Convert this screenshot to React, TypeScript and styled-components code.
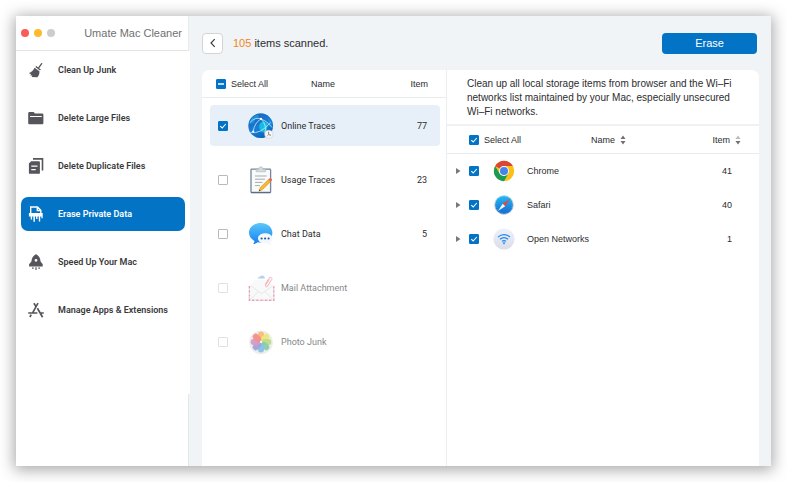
import React, { useEffect, useRef, useState } from "react";
import styled, { createGlobalStyle, css } from "styled-components";

const uiFont = `Roboto, "Liberation Sans", sans-serif`;
const wideFont = `"Liberation Sans", Arial, sans-serif`;

const GlobalStyle = createGlobalStyle`
  *, *::before, *::after { box-sizing: border-box; }
  body {
    margin: 0;
    background: #fff;
    color: #2c2c2e;
    font-family: ${uiFont};
    font-size: 9px;
    line-height: 12px;
  }
  button { font: inherit; color: inherit; padding: 0; border: 0; background: none; cursor: pointer; }
  svg { display: block; flex: none; }
`;

const Page = styled.div`
  min-height: 100vh;
  padding: 16px;
  display: flex;
`;

const AppWindow = styled.div`
  flex: 1;
  display: flex;
  min-width: 0;
  background: #f0f4f7;
  box-shadow: 0 2px 14px 2px rgba(0, 0, 0, 0.34);
`;

const Sidebar = styled.aside`
  flex: none;
  width: 174px;
  display: flex;
  flex-direction: column;
`;

const TitleBar = styled.header`
  height: 35px;
  margin-right: 1px;
  padding: 0 6px 0 5px;
  display: flex;
  align-items: center;
  gap: 5px;
  background: #fff;
  border-bottom: 1px solid #e4e4e4;
  border-right: 1px solid #e9ebec;
`;

const WindowDot = styled.button<{ $color: string }>`
  width: 8px;
  height: 8px;
  border-radius: 50%;
  background: ${(p) => p.$color};
`;

const AppTitle = styled.h1`
  margin: 0 0 0 auto;
  font-family: ${wideFont};
  font-size: 11px;
  line-height: 16px;
  font-weight: 400;
  color: #707070;
  white-space: nowrap;
`;

const Nav = styled.nav`
  padding: 2px 5px 67px;
  display: flex;
  flex-direction: column;
  gap: 14px;
  background: #fff;
`;

const SidebarFoot = styled.div`
  flex: 1;
  margin-right: 1px;
  background: #fff;
  border-right: 1px solid #e4e6e8;
`;

const NavItem = styled.a<{ $active?: boolean }>`
  height: 34px;
  padding-left: 7px;
  display: flex;
  align-items: center;
  gap: 14px;
  border-radius: 7px;
  font-weight: 600;
  text-decoration: none;
  white-space: nowrap;
  color: ${(p) => (p.$active ? "#fff" : "#3a3a3c")};
  background: ${(p) => (p.$active ? "#0373c6" : "transparent")};
  svg { color: ${(p) => (p.$active ? "#fff" : "#55555b")}; }
`;

const Main = styled.main`
  flex: 1;
  min-width: 0;
  padding: 0 12px;
  display: flex;
  flex-direction: column;
`;

const Toolbar = styled.div`
  height: 54px;
  padding-right: 2px;
  display: flex;
  align-items: center;
  gap: 10px;
  font-family: ${wideFont};
`;

const BackButton = styled.button`
  width: 21px;
  height: 21px;
  display: grid;
  place-items: center;
  color: #333;
  background: #fff;
  border: 1px solid #d2d4d6;
  border-radius: 4px;
`;

const Summary = styled.p`
  margin: 0;
  font-size: 11px;
  line-height: 16px;
  strong { font-weight: 400; color: #f08519; }
`;

const EraseButton = styled.button`
  width: 95px;
  height: 21px;
  margin-left: auto;
  color: #fff;
  font-size: 11px;
  line-height: 16px;
  background: #0373c6;
  border-radius: 4px;
`;

const Panels = styled.div`
  flex: 1;
  display: grid;
  grid-template-columns: 244px minmax(0, 1fr);
  gap: 1px;
  background: #eceff1;
  border-radius: 7px 7px 0 0;
  overflow: hidden;
`;

const Panel = styled.section`
  min-width: 0;
  background: #fff;
`;

const Table = styled.table`
  display: block;
  border-collapse: collapse;
  thead { display: block; }
  th, td { padding: 0; text-align: left; font-weight: 400; }
`;

const headRow = css`
  display: grid;
  align-items: center;
  height: 28px;
  border-bottom: 1px solid #e9ebec;
  font-family: ${wideFont};
  font-size: 9px;
`;

const CategoryHead = styled.tr`
  ${headRow}
  padding: 0 18px 0 14px;
  grid-template-columns: 95px 1fr auto;
`;

const CategoryBody = styled.tbody`
  padding: 7px 6px 7px 8px;
  display: flex;
  flex-direction: column;
  gap: 13px;
`;

const CategoryRow = styled.tr<{ $selected?: boolean; $dim?: boolean }>`
  height: 41px;
  padding: 0 13px 0 8px;
  display: grid;
  grid-template-columns: 30px 33px 1fr auto;
  align-items: center;
  border-radius: 4px;
  background: ${(p) => (p.$selected ? "#e7f0f8" : "transparent")};
  color: ${(p) => (p.$dim ? "#85878a" : "inherit")};
  td > svg { opacity: ${(p) => (p.$dim ? 0.75 : 1)}; }
`;

const DetailHead = styled.tr`
  ${headRow}
  padding: 0 18px 0 22px;
  grid-template-columns: 122px 1fr auto;
`;

const DetailBody = styled.tbody`
  padding: 0 27px 0 7px;
  display: flex;
  flex-direction: column;
  font-family: ${wideFont};
`;

const DetailRow = styled.tr`
  height: 34px;
  display: grid;
  grid-template-columns: 15px 24px 34px 1fr auto;
  align-items: center;
`;

const Description = styled.p`
  min-height: 55px;
  margin: 0;
  padding: 7px 20px 5px;
  font-family: ${wideFont};
  font-size: 10px;
  line-height: 14px;
  border-bottom: 2px solid #eff1f2;
`;

const CheckLabel = styled.label`
  display: flex;
  align-items: center;
  gap: 5px;
  white-space: nowrap;
`;

const CheckBox = styled.input`
  appearance: none;
  flex: none;
  display: block;
  width: 10px;
  height: 10px;
  margin: 0;
  border: 1px solid #b9b9b9;
  border-radius: 1px;
  background: #fff center / 10px 10px no-repeat;
  background-origin: border-box;
  &:disabled { border-color: #e0e1e2; }
  &:checked, &:indeterminate { border-color: #0373c6; background-color: #0373c6; }
  &:checked {
    background-image: url("data:image/svg+xml,%3Csvg xmlns='http://www.w3.org/2000/svg' viewBox='0 0 10 10'%3E%3Cpath d='M2.3 5.1 4.2 7 7.8 3' fill='none' stroke='white' stroke-width='1.1'/%3E%3C/svg%3E");
  }
  &:indeterminate {
    background-image: url("data:image/svg+xml,%3Csvg xmlns='http://www.w3.org/2000/svg' viewBox='0 0 10 10'%3E%3Cpath d='M2 5h6' stroke='white' stroke-width='1.3'/%3E%3C/svg%3E");
  }
`;

const SortButton = styled.button`
  display: flex;
  align-items: center;
  gap: 5px;
`;

const DisclosureButton = styled.button`
  width: 8px;
  height: 12px;
  display: grid;
  place-items: center;
  color: #77797b;
`;

/* ---------- icons ---------- */

const BroomIcon = () => (
  <svg width="16" height="16" viewBox="0 0 16 16" fill="none">
    <path d="M13.7 1.6 10.8 5.6" stroke="currentColor" strokeWidth="1.3" strokeLinecap="round" />
    <path d="M8.2 3.9 12.9 7.4 12 8.6 7.3 5.1Z" fill="currentColor" />
    <path d="M6.6 5.7 11.4 9.3C11.6 11.6 11 13.6 9.3 15.3L3.6 14.9 4.4 13.5 2.4 13.6 3 12.3 .9 11C3.6 10 5.4 8.2 6.6 5.7Z" fill="currentColor" />
  </svg>
);

const FolderIcon = () => (
  <svg width="16" height="16" viewBox="0 0 16 16" fill="currentColor">
    <path fillRule="evenodd" d="M1.4 2.1H5.6L7 3.5H14.2Q15.4 3.5 15.4 4.7V13Q15.4 14.2 14.2 14.2H1.4Q.2 14.2 .2 13V3.3Q.2 2.1 1.4 2.1ZM2 5.9V7.1H13.7V5.9Z" />
  </svg>
);

const CopyIcon = () => (
  <svg width="16" height="16" viewBox="0 0 16 16" fill="none">
    <path d="M5 .9H14.5V12.6" stroke="currentColor" strokeWidth="1.6" />
    <path fill="currentColor" fillRule="evenodd" d="M3.2 3.2H11Q11.9 3.2 11.9 4.1V14.9Q11.9 15.8 11 15.8H1.8Q.9 15.8 .9 14.9V5.5ZM3.3 7.4V8.7H9.5V7.4ZM3.3 11V12.3H7.7V11Z" />
  </svg>
);

const ShredIcon = () => (
  <svg width="16" height="16" viewBox="0 0 16 16" fill="none">
    <path d="M2.7 7.5V1H9.5L12.8 4.2V7.5M9.3 1V4.5H12.8" stroke="currentColor" strokeWidth="1.4" />
    <path d="M.9 7H14.7V12.3H13.4V10.4H12.2V15.5H10.8V10.4H9.5V13H8.1V10.4H6.9V15.8H5.4V10.4H4.1V13.5H2.7V10.4H.9Z" fill="currentColor" />
  </svg>
);

const RocketIcon = () => (
  <svg width="16" height="16" viewBox="0 0 16 16" fill="currentColor">
    <path fillRule="evenodd" d="M8 .2C10.9 1.5 12.2 4 12.6 7.4L14.7 10.3V12.4H1.1V10.3L3.4 7.4C3.8 4 5.1 1.5 8 .2ZM8 4.9A1.4 1.4 0 1 0 8 7.7 1.4 1.4 0 1 0 8 4.9Z" />
    <path d="M4.3 13.2H5.5V15H4.3ZM7.4 13.2H8.6V16H7.4ZM10.5 13.2H11.7V15H10.5Z" />
  </svg>
);

const AppsIcon = () => (
  <svg width="16" height="16" viewBox="0 0 16 16" fill="none" stroke="currentColor" strokeWidth="1.7">
    <path d="M10 1.2 4.6 10.8M5.9 1.2 8 4.6M9.4 6.2 14.6 15.2M.2 11H9.4M12.3 11H15.8M3.2 12.6 1.9 15" />
  </svg>
);

const BackIcon = () => (
  <svg width="10" height="10" viewBox="0 0 10 10" fill="none" stroke="currentColor" strokeWidth="1.1">
    <path d="M6.7 1.2 3 5 6.7 8.8" />
  </svg>
);

const SortIcon = ({ upColor = "#6e7072" }: { upColor?: string }) => (
  <svg width="6" height="10" viewBox="0 0 6 10">
    <path d="M3 .5 5.5 4H.5Z" fill={upColor} />
    <path d="M3 9.5 5.5 6H.5Z" fill="#6e7072" />
  </svg>
);

const TriangleIcon = () => (
  <svg width="6" height="6" viewBox="0 0 6 6" fill="currentColor"><path d="M1 0 5.5 3 1 6Z" /></svg>
);

const GlobeIcon = () => (
  <svg width="26" height="26" viewBox="0 0 26 26" fill="none">
    <defs>
      <linearGradient id="globe" x1="6" y1="1" x2="18" y2="25" gradientUnits="userSpaceOnUse">
        <stop stopColor="#1c63bd" /><stop offset=".55" stopColor="#1580d6" /><stop offset="1" stopColor="#0b5fb5" />
      </linearGradient>
    </defs>
    <circle cx="12.7" cy="12.7" r="12.4" fill="url(#globe)" />
    <path d="M3 6Q6 2.4 10 1.6L11 4 7 6.6 6 10 1.4 11Z" fill="#1c90dd" />
    <path d="M12 10.5Q14.5 8 17.5 9.2T19.6 13.5Q19.5 17 17 18.8T12.4 17.4 12 10.5Z" fill="#16bde2" />
    <path d="M20 5 23.6 9 23.5 13.4 21 11Z" fill="#1c90dd" />
    <path d="M1.8 9.6Q7 3.8 13 5.8T24.2 14.6M13 5.8Q6.4 10 5.2 18.4M13 5.8Q19.6 13 16.6 20.4M2.6 19.4Q12 21.6 22.6 9.6" stroke="#c9e8fd" strokeWidth=".8" />
    <circle cx="13" cy="5.9" r="1.1" fill="#fff" /><circle cx="5.2" cy="18.6" r="1.1" fill="#fff" />
    <circle cx="20.8" cy="21.3" r="4.1" fill="#f3f5f6" stroke="#c5cbd0" strokeWidth=".5" />
    <path d="M20.6 18.8V21.6L23 22.3" stroke="#555" strokeWidth=".7" /><path d="M20.6 21.6 18.9 23.2" stroke="#f28620" strokeWidth=".7" />
  </svg>
);

const ClipboardIcon = () => (
  <svg width="26" height="28" viewBox="0 0 26 28" fill="none">
    <rect x="3" y="3.2" width="19.6" height="23.3" rx=".8" fill="#f9fafa" stroke="#75859a" strokeWidth="1.3" />
    <path d="M3 26.6H22.6" stroke="#586b80" strokeWidth="1" />
    <path d="M8.2 5.8V3.2H10.6Q10.8 .8 12.8 .8T15 3.2H17.6V5.8Z" fill="#d4dadd" stroke="#aeb6bc" strokeWidth=".6" />
    <path d="M7 10H18.7M7 13.2H17M7 16.4H14.5M7 19.6H12" stroke="#a6acb2" strokeWidth="1" />
    <path d="M11 25.1 12.4 21.3 20.4 13.5 22.6 15.7 14.3 23.8Z" fill="#f5b82e" stroke="#cf8b15" strokeWidth=".5" />
    <path d="M20.3 13.6 21.7 12.2Q22.3 11.6 23 12.3L23.9 13.2Q24.5 13.8 23.9 14.5L22.6 15.8Z" fill="#ef625f" />
    <path d="M10.8 25.3 11.4 23.6 12.6 24.7Z" fill="#414141" />
  </svg>
);

const ChatIcon = () => (
  <svg width="26" height="26" viewBox="0 0 26 26">
    <defs><linearGradient id="chat" x2="0" y2="1"><stop stopColor="#5bc8fa" /><stop offset="1" stopColor="#147ff3" /></linearGradient></defs>
    <path d="M12.7 2C19.4 2 24.4 6.4 24.4 11.8S19.4 21.6 12.7 21.6Q11 21.6 9.7 21.3 8 22.9 5.2 23 6.6 21.7 6.4 19.9C3.2 18.2 1 15.3 1 11.8 1 6.4 6 2 12.7 2Z" fill="url(#chat)" />
    <path d="M17.2 12.3C21.3 12.3 24.4 14.5 24.4 17.5Q24.4 19.8 22.4 21.2 22.5 22.9 23.7 24 21.4 24 19.8 22.4C14.6 23.2 10 21 10 17.5 10 14.5 13.1 12.3 17.2 12.3Z" fill="#f3f8fc" />
    <circle cx="13.6" cy="17.5" r="1.1" fill="#1659a8" /><circle cx="17.1" cy="17.5" r="1.1" fill="#1659a8" /><circle cx="20.6" cy="17.5" r="1.1" fill="#1659a8" />
  </svg>
);

const MailIcon = () => (
  <svg width="28" height="28" viewBox="0 0 28 28" fill="none">
    <path d="M9.6 4.4Q10.2 2.8 12 2.8 13 1 15 1.7 16.6 2.1 17 4.4Z" fill="#9cc3e5" />
    <path d="M2.2 11.5 5.5 8.2V6H22V8.2L25.2 11.5V25H2.2Z" fill="#f7f8f9" />
    <path d="M1.4 12V26.2H25.8V12" stroke="#ee7585" strokeWidth="1.4" strokeDasharray="2.2 2" />
    <path d="M1.4 14.3V26.2H25.8V12" stroke="#a6c4e6" strokeWidth="1.3" strokeDasharray="1.2 3" />
    <path d="M2.6 11.5 12 18.6Q13.6 19.9 15.2 18.6L24.8 11.5M3 25 10.2 17.4M24.4 25 17 17.4" stroke="#d6d9dc" strokeWidth=".8" />
    <path d="M17.2 10.4 21 4.2Q22 2.8 23.2 3.5T23.7 5.6L19.6 12.2Q18.9 13.3 18 12.7T17.7 11L21.4 5.2" stroke="#f08c99" strokeWidth=".9" />
  </svg>
);

const petals = ["#f9a54a", "#e9df4c", "#a9d162", "#62bd8f", "#5faee0", "#8584cc", "#c57ab0", "#f06a66"];
const PhotosIcon = () => (
  <svg width="26" height="26" viewBox="0 0 26 26">
    <circle cx="13" cy="13.4" r="11.8" fill="#e6e7e8" />
    {petals.map((color, i) => (
      <rect key={color} x="10" y="2.6" width="6" height="9.4" rx="3" fill={color} opacity=".95" transform={`rotate(${i * 45} 13 13)`} />
    ))}
    <circle cx="13" cy="13" r="1.1" fill="#f4f4f4" />
  </svg>
);

const ChromeIcon = () => (
  <svg width="22" height="22" viewBox="0 0 22 22">
    <circle cx="11" cy="11" r="10.2" fill="#fbc116" />
    <path d="M2.2 5.9A10.2 10.2 0 0 1 19.8 5.9H11A5.1 5.1 0 0 0 6.6 8.4Z" fill="#dc4437" />
    <path d="M2.2 5.9A10.2 10.2 0 0 0 11 21.2L15.4 13.5A5.1 5.1 0 0 1 6.6 13.5Z" fill="#189c58" />
    <circle cx="11" cy="11" r="5" fill="#f5f6f6" /><circle cx="11" cy="11" r="4" fill="#4285ef" />
  </svg>
);

const SafariIcon = () => (
  <svg width="22" height="22" viewBox="0 0 22 22">
    <defs><linearGradient id="safari" x2="0" y2="1"><stop stopColor="#20bcf5" /><stop offset="1" stopColor="#1766d1" /></linearGradient></defs>
    <circle cx="11" cy="11" r="9.4" fill="url(#safari)" stroke="#d9dddf" strokeWidth=".9" />
    <circle cx="11" cy="11" r="7.9" fill="none" stroke="#6fc0f2" strokeWidth=".6" strokeDasharray=".5 1.5" />
    <path d="M17 5 9.7 9.8 12.2 12.3Z" fill="#f34235" /><path d="M5 17 9.7 9.8 12.2 12.3Z" fill="#f2f5f6" />
  </svg>
);

const WifiIcon = () => (
  <svg width="22" height="22" viewBox="0 0 22 22" fill="none">
    <defs><linearGradient id="wifi" x2="0" y2="1"><stop stopColor="#eef1f8" /><stop offset="1" stopColor="#dadeea" /></linearGradient></defs>
    <circle cx="11" cy="11" r="10.6" fill="url(#wifi)" />
    <path d="M4.9 9.1Q11 4.1 17.1 9.1M6.9 11.3Q11 7.9 15.1 11.3M8.9 13.4Q11 11.7 13.1 13.4" stroke="#2189ed" strokeWidth="1.2" />
    <path d="M9.6 14.8Q11 13.8 12.4 14.8L11 16.4Z" fill="#2189ed" />
  </svg>
);

/* ---------- data ---------- */

const navItems = [
  { label: "Clean Up Junk", Icon: BroomIcon },
  { label: "Delete Large Files", Icon: FolderIcon },
  { label: "Delete Duplicate Files", Icon: CopyIcon },
  { label: "Erase Private Data", Icon: ShredIcon },
  { label: "Speed Up Your Mac", Icon: RocketIcon },
  { label: "Manage Apps & Extensions", Icon: AppsIcon },
];

const categories = [
  { name: "Online Traces", count: 77, Icon: GlobeIcon, checked: true },
  { name: "Usage Traces", count: 23, Icon: ClipboardIcon },
  { name: "Chat Data", count: 5, Icon: ChatIcon },
  { name: "Mail Attachment", Icon: MailIcon, disabled: true },
  { name: "Photo Junk", Icon: PhotosIcon, disabled: true },
];

const details = [
  { name: "Chrome", count: 41, Icon: ChromeIcon },
  { name: "Safari", count: 40, Icon: SafariIcon },
  { name: "Open Networks", count: 1, Icon: WifiIcon },
];

function PartialCheckBox() {
  const ref = useRef<HTMLInputElement>(null);
  useEffect(() => {
    if (ref.current) ref.current.indeterminate = true;
  }, []);
  return <CheckBox type="checkbox" ref={ref} />;
}

export default function App() {
  const [active, setActive] = useState("Erase Private Data");
  return (
    <>
      <GlobalStyle />
      <Page>
        <AppWindow>
          <Sidebar>
            <TitleBar>
              <WindowDot $color="#fc5b57" aria-label="Close" />
              <WindowDot $color="#fdbb2d" aria-label="Minimize" />
              <WindowDot $color="#cdcdcd" aria-label="Zoom" />
              <AppTitle>Umate Mac Cleaner</AppTitle>
            </TitleBar>
            <Nav>
              {navItems.map(({ label, Icon }) => (
                <NavItem key={label} href="#" $active={label === active} onClick={() => setActive(label)}>
                  <Icon />
                  {label}
                </NavItem>
              ))}
            </Nav>
            <SidebarFoot />
          </Sidebar>
          <Main>
            <Toolbar>
              <BackButton aria-label="Back"><BackIcon /></BackButton>
              <Summary><strong>105</strong> items scanned.</Summary>
              <EraseButton>Erase</EraseButton>
            </Toolbar>
            <Panels>
              <Panel>
                <Table>
                  <thead>
                    <CategoryHead>
                      <th><CheckLabel><PartialCheckBox />Select All</CheckLabel></th>
                      <th>Name</th>
                      <th>Item</th>
                    </CategoryHead>
                  </thead>
                  <CategoryBody>
                    {categories.map(({ name, count, Icon, checked, disabled }) => (
                      <CategoryRow key={name} $selected={checked} $dim={disabled}>
                        <td><CheckBox type="checkbox" aria-label={name} defaultChecked={checked} disabled={disabled} /></td>
                        <td><Icon /></td>
                        <td>{name}</td>
                        <td>{count}</td>
                      </CategoryRow>
                    ))}
                  </CategoryBody>
                </Table>
              </Panel>
              <Panel>
                <Description>
                  Clean up all local storage items from browser and the Wi–Fi networks list maintained by your Mac, especially unsecured Wi–Fi networks.
                </Description>
                <Table>
                  <thead>
                    <DetailHead>
                      <th><CheckLabel><CheckBox type="checkbox" defaultChecked />Select All</CheckLabel></th>
                      <th><SortButton>Name<SortIcon /></SortButton></th>
                      <th><SortButton>Item<SortIcon upColor="#b9bbbd" /></SortButton></th>
                    </DetailHead>
                  </thead>
                  <DetailBody>
                    {details.map(({ name, count, Icon }) => (
                      <DetailRow key={name}>
                        <td><DisclosureButton aria-label={`Expand ${name}`}><TriangleIcon /></DisclosureButton></td>
                        <td><CheckBox type="checkbox" aria-label={name} defaultChecked /></td>
                        <td><Icon /></td>
                        <td>{name}</td>
                        <td>{count}</td>
                      </DetailRow>
                    ))}
                  </DetailBody>
                </Table>
              </Panel>
            </Panels>
          </Main>
        </AppWindow>
      </Page>
    </>
  );
}
